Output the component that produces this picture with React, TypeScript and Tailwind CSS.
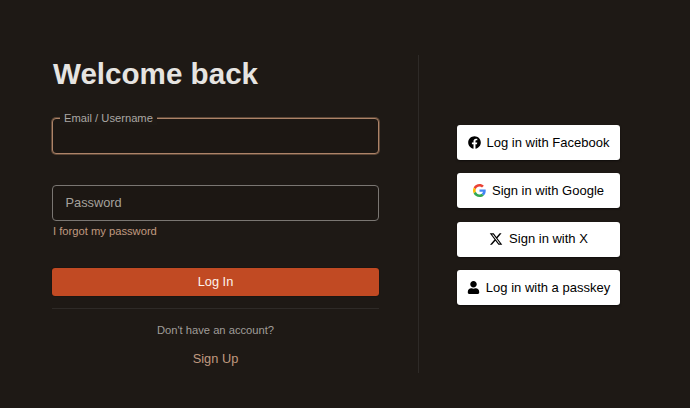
import { FaFacebook, FaUser } from "react-icons/fa";
import { FaXTwitter } from "react-icons/fa6";

function GoogleIcon() {
  return (
    <svg width="13" height="13" viewBox="0 0 48 48">
      <path fill="#EA4335" d="M24 9.5c3.54 0 6.71 1.22 9.21 3.6l6.85-6.85C35.9 2.38 30.47 0 24 0 14.62 0 6.51 5.38 2.56 13.22l7.98 6.19C12.43 13.72 17.74 9.5 24 9.5z" />
      <path fill="#4285F4" d="M46.98 24.55c0-1.57-.15-3.09-.38-4.55H24v9.02h12.94c-.58 2.96-2.26 5.48-4.78 7.18l7.73 6c4.51-4.18 7.09-10.36 7.09-17.65z" />
      <path fill="#FBBC05" d="M10.53 28.59c-.48-1.45-.76-2.99-.76-4.59s.27-3.14.76-4.59l-7.98-6.19C.92 16.46 0 20.12 0 24c0 3.88.92 7.54 2.56 10.78l7.97-6.19z" />
      <path fill="#34A853" d="M24 48c6.48 0 11.93-2.13 15.89-5.81l-7.73-6c-2.15 1.45-4.92 2.3-8.16 2.3-6.26 0-11.57-4.22-13.47-9.91l-7.98 6.19C6.51 42.62 14.62 48 24 48z" />
    </svg>
  );
}

function SocialButton({ icon, label }: { icon: React.ReactNode; label: string }) {
  return (
    <button className="flex h-[35px] w-[163px] items-center justify-center gap-[6px] rounded-[3px] bg-white text-[13px] text-black shadow-[0_1px_2px_rgba(0,0,0,0.5)]">
      {icon}
      <span>{label}</span>
    </button>
  );
}

export default function App() {
  return (
    <div className="flex h-[408px] w-[690px] bg-[#1e1915] pt-[55px] font-['Liberation_Sans',Arial,sans-serif]">
      <div className="ml-[52px] flex w-[327px] flex-col">
        <h1 className="mt-[1px] ml-[1px] text-[29.6px] leading-[36px] font-bold text-[#e6e4e1]">Welcome back</h1>

        <div className="relative mt-[26px] h-[36px] rounded-[4px] border border-[#ad8368] bg-[#1c1713] shadow-[0_0_0_1px_rgba(168,126,95,0.45)]">
          <label className="absolute top-[-8px] left-[7px] bg-[#1e1915] px-[4px] text-[11.2px] leading-[14px] text-[#aaa7a4]">
            Email / Username
          </label>
        </div>

        <div className="mt-[31px] flex h-[36px] items-center rounded-[4px] border border-[#7a7672] bg-[#1c1713] px-[12.5px] text-[12.8px] text-[#a5a19c]">
          Password
        </div>
        <a className="mt-[3px] ml-[1px] text-[11.2px] leading-[15px] text-[#c09a80]">I forgot my password</a>

        <button className="mt-[29px] h-[28px] rounded-[3px] bg-[#c14a23] text-[12.8px] text-[#fdf2ec] shadow-[0_0_1px_#000]">
          Log In
        </button>
        <div className="mt-[12px] h-px bg-[#2e2a27]" />

        <p className="mt-[14px] text-center text-[11.2px] leading-[14px] text-[#a09d99]">Don't have an account?</p>
        <a className="mt-[14px] text-center text-[12.8px] leading-[16px] text-[#c09a80]">Sign Up</a>
      </div>

      <div className="ml-[39px] h-[318px] w-px bg-[#2e2a27]" />

      <div className="ml-[38px] flex h-[318px] flex-col justify-center gap-[13.4px] pt-[2px]">
        <SocialButton icon={<FaFacebook size={13} color="#000" />} label="Log in with Facebook" />
        <SocialButton icon={<GoogleIcon />} label="Sign in with Google" />
        <SocialButton icon={<FaXTwitter size={14} color="#000" />} label="Sign in with X" />
        <SocialButton icon={<FaUser size={13} color="#000" />} label="Log in with a passkey" />
      </div>
    </div>
  );
}
